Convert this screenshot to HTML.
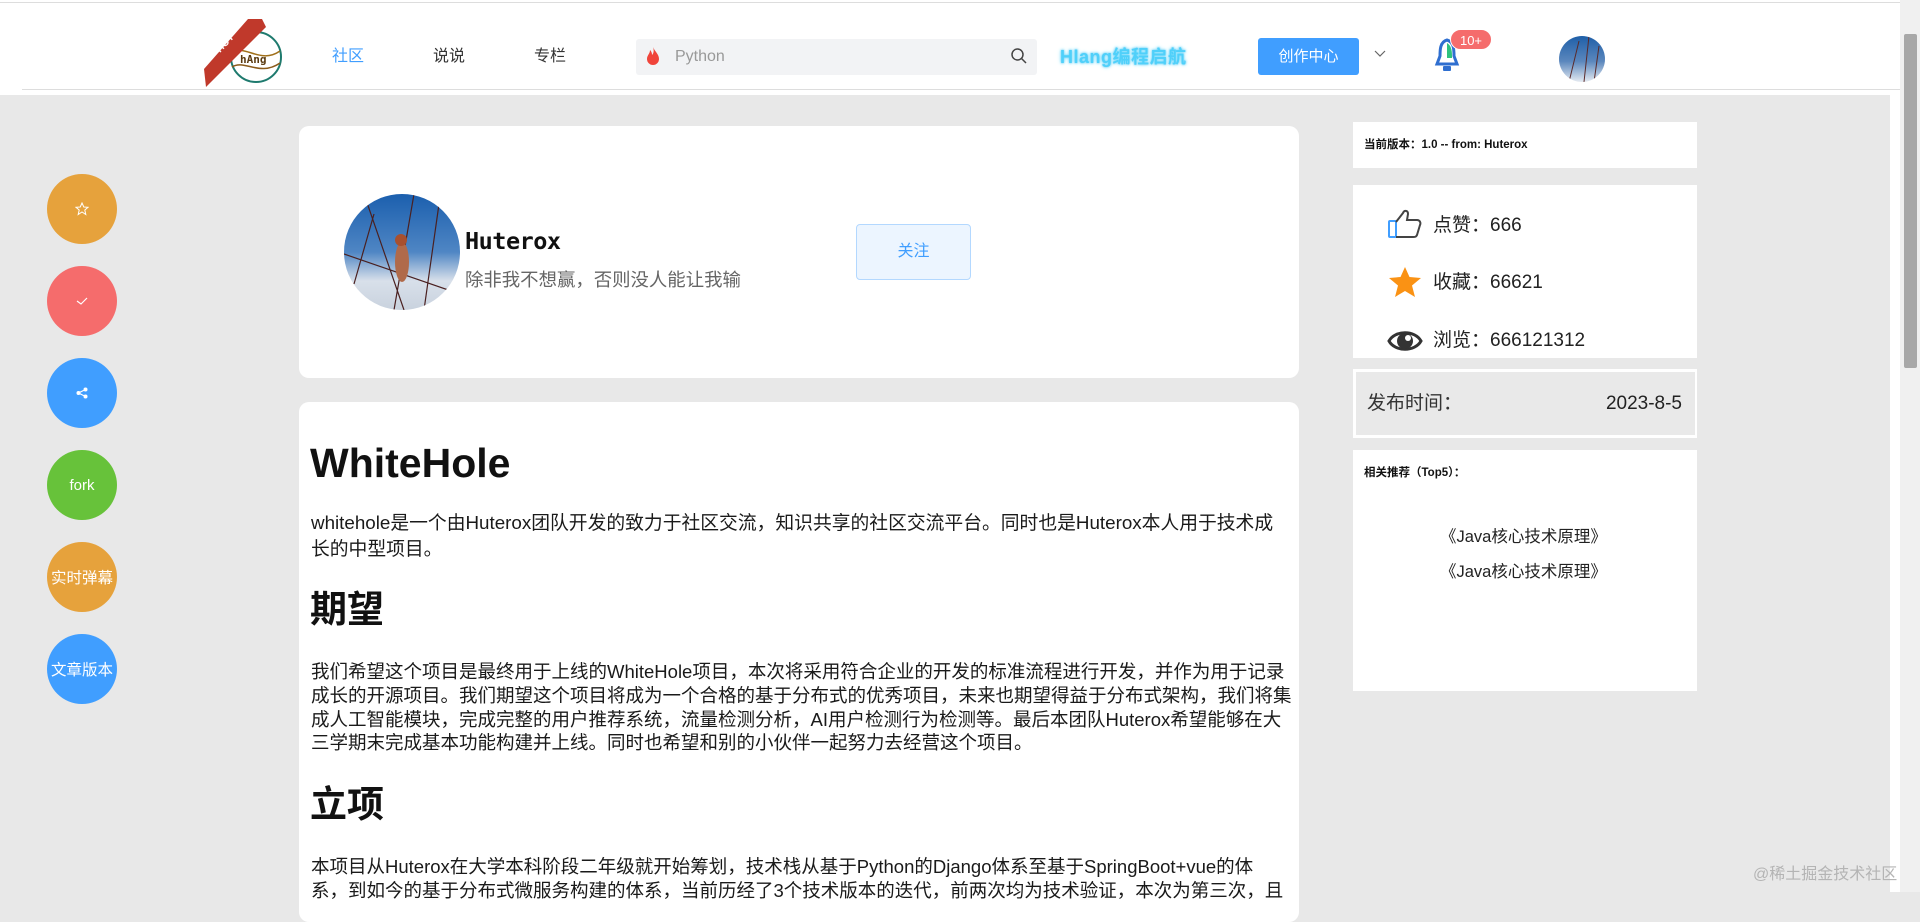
<!DOCTYPE html>
<html><head><meta charset="utf-8">
<style>
*{margin:0;padding:0;box-sizing:border-box}
body{width:1920px;height:892px;overflow:hidden;background:#e8e8e8;position:relative;font-family:"Liberation Sans","Noto Sans CJK SC",sans-serif;color:#222}
.a{position:absolute;white-space:nowrap}
.circ{position:absolute;left:47px;width:70px;height:70px;border-radius:50%;color:#fff;display:flex;align-items:center;justify-content:center;font-size:15px}
.ln{position:absolute;left:311px;height:24px;line-height:24px;font-size:18.5px;white-space:nowrap;color:#1a1a1a}
.stat{position:absolute;left:1433px;font-size:19px;line-height:24px;color:#222}
</style></head><body>
<!-- header -->
<div class="a" style="left:0;top:0;width:1902px;height:95px;background:#fff"></div>
<div class="a" style="left:0;top:2px;width:1902px;height:1px;background:#ddd"></div>
<div class="a" style="left:22px;top:89px;width:1880px;height:1px;background:#ddd"></div>
<!-- logo -->
<svg class="a" style="left:204px;top:17px" width="90" height="72" viewBox="0 0 90 72">
<circle cx="52" cy="40" r="25" fill="none" stroke="#1e7a6e" stroke-width="2"/>
<path d="M28 36 C40 26 56 48 76 34" fill="none" stroke="#a0701a" stroke-width="1.5"/>
<path d="M28 50 C40 42 56 60 76 46" fill="none" stroke="#8a5a1a" stroke-width="1.5"/>
<text x="36" y="46" font-family="DejaVu Sans Mono,monospace" font-weight="bold" font-size="11" fill="#5a3a10">hAng</text>
<path d="M0 52 L44 2 L58 2 L62 10 L2 70 Z" fill="#c0392b"/>
<text x="16" y="36" transform="rotate(-47 16 36)" font-family="Liberation Sans" font-weight="bold" font-size="10" fill="#fff">HOT</text>
</svg>
<div class="a" style="left:332px;top:46px;font-size:16px;color:#409eff;line-height:22px">社区</div>
<div class="a" style="left:433px;top:46px;font-size:16px;color:#333;line-height:22px">说说</div>
<div class="a" style="left:534px;top:46px;font-size:16px;color:#333;line-height:22px">专栏</div>
<div class="a" style="left:636px;top:39px;width:401px;height:36px;background:#f2f3f5;border-radius:3px"></div>
<svg class="a" style="left:646px;top:47px" width="14" height="18" viewBox="0 0 14 18"><path d="M7 0 C9 5 13 7 13 12 A6 6 0 0 1 1 12 C1 8 4 7 4 3 C6 5 6 7 6 8 C8 6 8 3 7 0Z" fill="#f0443a"/></svg>
<div class="a" style="left:675px;top:46px;font-size:16px;color:#999;line-height:22px">Python</div>
<svg class="a" style="left:1010px;top:47px" width="18" height="18" viewBox="0 0 18 18"><circle cx="7.5" cy="7.5" r="5.5" fill="none" stroke="#444" stroke-width="1.5"/><path d="M11.5 11.5 L16 16" stroke="#444" stroke-width="1.5"/></svg>
<div class="a" style="left:1060px;top:45px;font-size:18px;font-weight:bold;color:#4fd0fa;line-height:24px;text-shadow:0 0 4px #8ee6ff,0 0 2px #39b8ee;letter-spacing:0.5px">Hlang编程启航</div>
<div class="a" style="left:1258px;top:38px;width:101px;height:37px;background:#409eff;border-radius:3px;color:#fff;font-size:15px;line-height:37px;text-align:center">创作中心</div>
<svg class="a" style="left:1374px;top:50px" width="12" height="8" viewBox="0 0 12 8"><path d="M1 1 L6 6 L11 1" fill="none" stroke="#666" stroke-width="1.2"/></svg>
<svg class="a" style="left:1434px;top:38px" width="28" height="36" viewBox="0 0 28 36"><path d="M13 2 C6 4 6 12 6 18 L3 26 L23 26 L20 18 C20 12 20 4 13 2Z" fill="#fff" stroke="#2f6fd0" stroke-width="3"/><path d="M13 5 C18 8 18 14 18 20 L13 20Z" fill="#2ec27e"/><rect x="9" y="28" width="8" height="5" rx="1" fill="#2f6fd0"/></svg>
<div class="a" style="left:1450px;top:29px;width:42px;height:21px;background:#f56c6c;border-radius:11px;color:#fff;font-size:13px;line-height:21px;text-align:center;border:1px solid #fff">10+</div>
<svg class="a" style="left:1559px;top:36px" width="46" height="46" viewBox="0 0 46 46"><defs><linearGradient id="g1" x1="0" y1="0" x2="0" y2="1"><stop offset="0" stop-color="#1f5fa8"/><stop offset="0.55" stop-color="#5b87bd"/><stop offset="1" stop-color="#e6ebf2"/></linearGradient><clipPath id="c1"><circle cx="23" cy="23" r="23"/></clipPath></defs><circle cx="23" cy="23" r="23" fill="url(#g1)"/><g clip-path="url(#c1)" stroke="#5a2a2a" stroke-width="1"><path d="M10 46 L20 5 M25 46 L30 0 M35 46 L40 10"/></g></svg>
<!-- scrollbar -->
<div class="a" style="left:1890px;top:95px;width:10px;height:797px;background:#fff"></div>
<div class="a" style="left:1900px;top:0;width:20px;height:892px;background:#f0f0f0"></div>
<div class="a" style="left:1904px;top:34px;width:13px;height:334px;background:#a8a8a8;border-radius:2px"></div>
<!-- left circles -->
<div class="circ" style="top:174px;background:#e6a23c"><svg width="14" height="14" viewBox="0 0 14 14"><path d="M7 1 L8.8 5 L13 5.3 L9.8 8 L10.8 12.5 L7 10 L3.2 12.5 L4.2 8 L1 5.3 L5.2 5Z" fill="none" stroke="#fff" stroke-width="1"/></svg></div>
<div class="circ" style="top:266px;background:#f56c6c"><svg width="14" height="10" viewBox="0 0 14 10"><path d="M2 5 L6 8 L12 2" fill="none" stroke="#fff" stroke-width="1.2"/></svg></div>
<div class="circ" style="top:358px;background:#409eff"><svg width="12" height="12" viewBox="0 0 12 12"><circle cx="9.5" cy="2.5" r="2" fill="#fff"/><circle cx="2.5" cy="6" r="2" fill="#fff"/><circle cx="9.5" cy="9.5" r="2" fill="#fff"/><path d="M9.5 2.5 L2.5 6 L9.5 9.5" stroke="#fff" stroke-width="1.2" fill="none"/></svg></div>
<div class="circ" style="top:450px;background:#67c23a">fork</div>
<div class="circ" style="top:542px;background:#e6a23c;font-size:15.5px">实时弹幕</div>
<div class="circ" style="top:634px;background:#409eff;font-size:15.5px">文章版本</div>
<!-- profile card -->
<div class="a" style="left:299px;top:126px;width:1000px;height:252px;background:#fff;border-radius:10px"></div>
<svg class="a" style="left:344px;top:194px" width="116" height="116" viewBox="0 0 116 116"><defs><linearGradient id="g2" x1="0" y1="0" x2="0" y2="1"><stop offset="0" stop-color="#1b5fae"/><stop offset="0.5" stop-color="#4f86c4"/><stop offset="0.75" stop-color="#d8e0ea"/><stop offset="1" stop-color="#c9d2de"/></linearGradient><clipPath id="c2"><circle cx="58" cy="58" r="58"/></clipPath></defs><circle cx="58" cy="58" r="58" fill="url(#g2)"/><g clip-path="url(#c2)" stroke="#4a2020" stroke-width="1.2" fill="none"><path d="M20 0 L60 116 M70 0 L50 116 M95 10 L80 116 M0 60 L116 100 M30 20 L10 90"/></g><ellipse cx="58" cy="68" rx="7" ry="20" fill="#b06a4a"/><circle cx="57" cy="46" r="6" fill="#a8502f"/></svg>
<div class="a" style="left:465px;top:226px;font-family:'DejaVu Sans Mono',monospace;font-weight:bold;font-size:23.5px;line-height:30px;color:#111;letter-spacing:-0.5px">Huterox</div>
<div class="a" style="left:465px;top:269px;font-size:18.4px;line-height:22px;color:#666">除非我不想赢，否则没人能让我输</div>
<div class="a" style="left:856px;top:224px;width:115px;height:56px;background:#ecf5ff;border:1px solid #b3d8ff;border-radius:4px;color:#409eff;font-size:16px;line-height:54px;text-align:center">关注</div>
<!-- content card -->
<div class="a" style="left:299px;top:402px;width:1000px;height:520px;background:#fff;border-radius:10px"></div>
<div class="a" style="left:310px;top:438px;font-size:41px;font-weight:bold;line-height:50px;color:#111">WhiteHole</div>
<div class="ln" style="top:511px;font-size:18.8px">whitehole是一个由Huterox团队开发的致力于社区交流，知识共享的社区交流平台。同时也是Huterox本人用于技术成</div>
<div class="ln" style="top:537px;font-size:18.8px">长的中型项目。</div>
<div class="a" style="left:310px;top:588px;font-size:37px;font-weight:bold;line-height:44px;color:#111">期望</div>
<div class="ln" style="top:660px">我们希望这个项目是最终用于上线的WhiteHole项目，本次将采用符合企业的开发的标准流程进行开发，并作为用于记录</div>
<div class="ln" style="top:684px">成长的开源项目。我们期望这个项目将成为一个合格的基于分布式的优秀项目，未来也期望得益于分布式架构，我们将集</div>
<div class="ln" style="top:708px">成人工智能模块，完成完整的用户推荐系统，流量检测分析，AI用户检测行为检测等。最后本团队Huterox希望能够在大</div>
<div class="ln" style="top:731px">三学期末完成基本功能构建并上线。同时也希望和别的小伙伴一起努力去经营这个项目。</div>
<div class="a" style="left:310px;top:783px;font-size:37px;font-weight:bold;line-height:44px;color:#111">立项</div>
<div class="ln" style="top:855px">本项目从Huterox在大学本科阶段二年级就开始筹划，技术栈从基于Python的Django体系至基于SpringBoot+vue的体</div>
<div class="ln" style="top:879px">系，到如今的基于分布式微服务构建的体系，当前历经了3个技术版本的迭代，前两次均为技术验证，本次为第三次，且</div>
<!-- right panel -->
<div class="a" style="left:1353px;top:122px;width:344px;height:46px;background:#fff"></div>
<div class="a" style="left:1364px;top:137px;font-size:11.5px;font-weight:bold;line-height:16px;color:#111">当前版本：1.0 -- from: Huterox</div>
<div class="a" style="left:1353px;top:185px;width:344px;height:173px;background:#fff"></div>
<svg class="a" style="left:1388px;top:209px" width="34" height="30" viewBox="0 0 34 30"><rect x="1" y="12" width="7" height="16" rx="1" fill="none" stroke="#409eff" stroke-width="2"/><path d="M8 13 L15 4 C16 1 20 1 20 5 L19 11 L29 11 C32 11 33 14 32 16 L29 26 C28 28 27 28 25 28 L8 28" fill="none" stroke="#444" stroke-width="2"/></svg>
<div class="stat" style="top:214px">点赞：666</div>
<svg class="a" style="left:1388px;top:266px" width="34" height="32" viewBox="0 0 34 32"><path d="M17 1 L21.5 11 L33 12 L24 19.5 L27 31 L17 25 L7 31 L10 19.5 L1 12 L12.5 11Z" fill="#fa9214"/></svg>
<div class="stat" style="top:271px">收藏：66621</div>
<svg class="a" style="left:1387px;top:326px" width="36" height="30" viewBox="0 0 36 30"><path d="M2 15 C8 4 28 4 34 15 C28 26 8 26 2 15Z" fill="none" stroke="#333" stroke-width="3"/><circle cx="18" cy="15" r="8" fill="#333"/><circle cx="21" cy="12" r="3" fill="#fff"/></svg>
<div class="stat" style="top:329px">浏览：666121312</div>
<div class="a" style="left:1353px;top:369px;width:344px;height:69px;background:#fff"></div>
<div class="a" style="left:1356px;top:372px;width:339px;height:63px;background:#e9e9e9"></div>
<div class="a" style="left:1367px;top:392px;font-size:19px;line-height:24px;color:#333">发布时间：</div>
<div class="a" style="left:1560px;top:392px;width:122px;text-align:right;font-size:19px;line-height:24px;color:#222">2023-8-5</div>
<div class="a" style="left:1353px;top:450px;width:344px;height:241px;background:#fff"></div>
<div class="a" style="left:1364px;top:465px;font-size:11.5px;font-weight:bold;line-height:16px;color:#111">相关推荐（Top5）：</div>
<div class="a" style="left:1440px;top:525px;font-size:16.5px;line-height:24px;color:#222">《Java核心技术原理》</div>
<div class="a" style="left:1440px;top:560px;font-size:16.5px;line-height:24px;color:#222">《Java核心技术原理》</div>
<div class="a" style="left:1753px;top:864px;font-size:16px;line-height:22px;color:#b4b4b4">@稀土掘金技术社区</div>
</body></html>
